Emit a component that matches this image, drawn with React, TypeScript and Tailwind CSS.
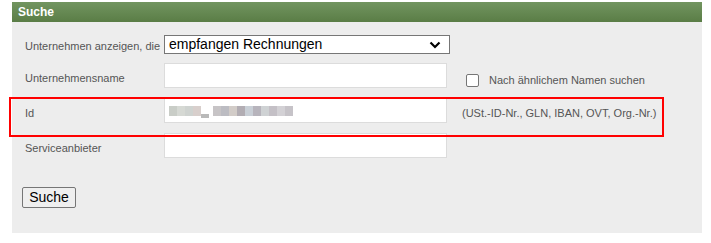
import React from "react";

export default function App() {
  const label = "text-[11px] text-[#555555] leading-none";
  const input = "box-border h-[25px] w-[283px] border border-[#dcdcdc] bg-white";
  return (
    <div className="relative min-h-[243px] bg-white pl-[12px] pt-[2px]" style={{ fontFamily: "Arial, 'Liberation Sans', sans-serif" }}>
      <div className="w-[690px]">
        <div className="flex h-[20px] items-center bg-gradient-to-b from-[#729560] to-[#5a7d46] pl-[6px] text-[12px] font-bold text-white">
          Suche
        </div>
        <div className="h-[211px] bg-[#ededed] pl-[13px] pt-[13px]">
          <div className="flex h-[19px] items-center">
            <div className={`mt-[3px] w-[139px] ${label}`}>Unternehmen anzeigen, die</div>
            <div className="relative box-border flex h-[19px] w-[286px] items-center border border-[#767676] bg-white pl-[4px] text-[14px] text-black">
              empfangen Rechnungen
              <svg className="absolute right-[8px] top-[5px]" width="12" height="8" viewBox="0 0 12 8">
                <path d="M1.5 1.5 L6 6 L10.5 1.5" fill="none" stroke="#000" strokeWidth="2.2" />
              </svg>
            </div>
          </div>
          <div className="mt-[9px] flex h-[25px] items-center">
            <div className={`mt-[6px] w-[139px] ${label}`}>Unternehmensname</div>
            <div className={input}></div>
            <span className="ml-[19px] mt-[9px] box-border h-[13px] w-[13px] rounded-[2px] border border-[#767676] bg-white"></span>
            <span className={`ml-[10px] mt-[9px] ${label}`}>Nach ähnlichem Namen suchen</span>
          </div>
          <div className="mt-[10px] flex h-[25px] items-center">
            <div className={`mt-[6px] w-[139px] ${label}`}>Id</div>
            <div className={`${input} flex items-center pl-[4px]`}>
              <div className="flex h-[14px] items-center gap-0">
                <span className="h-[10px] w-[8px] bg-[#c9cdc7]"></span>
                <span className="h-[10px] w-[8px] bg-[#d6d9d4]"></span>
                <span className="h-[10px] w-[8px] bg-[#cfd3d0]"></span>
                <span className="h-[10px] w-[8px] bg-[#d8cfcc]"></span>
                <span className="mt-[10px] h-[4px] w-[8px] bg-[#b9b9b9]"></span>
                <span className="w-[4px]"></span>
                <span className="h-[10px] w-[8px] bg-[#c7c4c6]"></span>
                <span className="h-[10px] w-[8px] bg-[#bcbcc2]"></span>
                <span className="h-[10px] w-[8px] bg-[#d2ccc8]"></span>
                <span className="h-[10px] w-[8px] bg-[#b2adb3]"></span>
                <span className="h-[10px] w-[8px] bg-[#c9cfd6]"></span>
                <span className="h-[10px] w-[8px] bg-[#b7b4bc]"></span>
                <span className="h-[10px] w-[8px] bg-[#cfd2d4]"></span>
                <span className="h-[10px] w-[8px] bg-[#c4c0c6]"></span>
                <span className="h-[10px] w-[8px] bg-[#d3d1d5]"></span>
                <span className="h-[10px] w-[8px] bg-[#c6c3c8]"></span>
              </div>
            </div>
            <span className={`ml-[15px] mt-[6px] ${label}`}>(USt.-ID-Nr., GLN, IBAN, OVT, Org.-Nr.)</span>
          </div>
          <div className="mt-[10px] flex h-[25px] items-center">
            <div className={`mt-[6px] w-[139px] ${label}`}>Serviceanbieter</div>
            <div className={input}></div>
          </div>
          <button className="-ml-[3px] mt-[29px] box-border flex h-[21px] w-[54px] items-center justify-center rounded-[2px] border border-[#767676] bg-[#efefef] text-[14px] text-black">
            Suche
          </button>
        </div>
      </div>
      <div className="pointer-events-none absolute left-[9px] top-[97px] h-[40px] w-[655px] border-2 border-[#ff0000]"></div>
    </div>
  );
}
